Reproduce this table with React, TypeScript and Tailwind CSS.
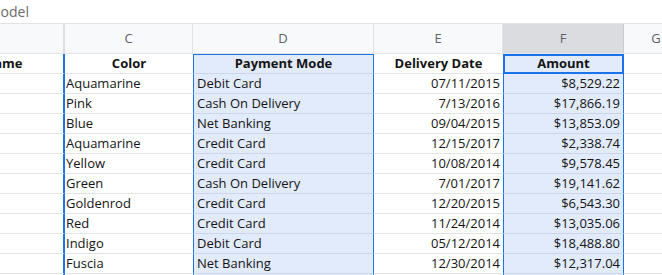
import React from "react";

const rows = [
  ["Aquamarine", "Debit Card", "07/11/2015", "$8,529.22"],
  ["Pink", "Cash On Delivery", "7/13/2016", "$17,866.19"],
  ["Blue", "Net Banking", "09/04/2015", "$13,853.09"],
  ["Aquamarine", "Credit Card", "12/15/2017", "$2,338.74"],
  ["Yellow", "Credit Card", "10/08/2014", "$9,578.45"],
  ["Green", "Cash On Delivery", "7/01/2017", "$19,141.62"],
  ["Goldenrod", "Credit Card", "12/20/2015", "$6,543.30"],
  ["Red", "Credit Card", "11/24/2014", "$13,035.06"],
  ["Indigo", "Debit Card", "05/12/2014", "$18,488.80"],
  ["Fuscia", "Net Banking", "12/30/2014", "$12,317.04"],
  ["", "", "", ""],
];

const App = () => {
  return (
    <div className="w-[662px] h-[275px] overflow-hidden bg-white font-['Open_Sans',sans-serif] text-[13px] text-[#141414]">
      {/* formula bar */}
      <div className="h-[23px] flex items-center">
        <span className="ml-[-12px] text-[14px] text-[#6b6b6b]">Model</span>
      </div>

      {/* column letters */}
      <div className="flex h-[31px] border-y border-[#e1e3e6] bg-[#f8f9fa] text-[#5f6368] ml-[-57px]">
        <div className="w-[122px] shrink-0 border-r-2 border-[#dcdde0]"></div>
        <div className="w-[128px] shrink-0 border-r border-[#e1e3e6] flex items-center justify-center">C</div>
        <div className="w-[181px] shrink-0 border-r border-[#e1e3e6] flex items-center justify-center">D</div>
        <div className="w-[129px] shrink-0 border-r border-[#e1e3e6] flex items-center justify-center">E</div>
        <div className="w-[121px] shrink-0 border-r border-[#c9cbcf] bg-[#dadce0] flex items-center justify-center">F</div>
        <div className="w-[64px] shrink-0 flex items-center justify-center">G</div>
      </div>

      {/* header row */}
      <div className="flex h-[20px] font-bold ml-[-57px]">
        <div className="w-[122px] shrink-0 border-b border-r-2 border-b-[#e2e3e3] border-r-[#1a73e8] flex items-center justify-center">Name</div>
        <div className="w-[128px] shrink-0 border-b border-[#e2e3e3] flex items-center justify-center">Color</div>
        <div className="w-[181px] shrink-0 border border-[#1a73e8] border-b-[#cdd6e6] bg-[#e1ebfc] flex items-center justify-center">Payment Mode</div>
        <div className="w-[129px] shrink-0 border-b border-[#e2e3e3] flex items-center justify-center">Delivery Date</div>
        <div className="w-[121px] shrink-0 border-2 border-[#1a73e8] bg-[#e1ebfc] flex items-center justify-center">Amount</div>
        <div className="w-[80px] shrink-0 border-b border-[#e2e3e3]"></div>
      </div>

      {rows.map((r, i) => (
        <div key={i} className="flex h-[20px] ml-[-57px]">
          <div className="w-[122px] shrink-0 border-b border-r-2 border-b-[#e2e3e3] border-r-[#1a73e8]"></div>
          <div className="w-[128px] shrink-0 border-b border-[#e2e3e3] flex items-center pl-[1px] whitespace-nowrap">{r[0]}</div>
          <div className="w-[181px] shrink-0 border-x border-b border-x-[#1a73e8] border-b-[#cdd6e6] bg-[#e1ebfc] flex items-center pl-[3px] whitespace-nowrap">{r[1]}</div>
          <div className="w-[129px] shrink-0 border-b border-[#e2e3e3] flex items-center justify-end pr-[3px]">{r[2]}</div>
          <div className="w-[121px] shrink-0 border-x border-b border-x-[#1a73e8] border-b-[#cdd6e6] bg-[#e1ebfc] flex items-center justify-end pr-[3px]">{r[3]}</div>
          <div className="w-[80px] shrink-0 border-b border-[#e2e3e3]"></div>
        </div>
      ))}
    </div>
  );
};

export default App;
